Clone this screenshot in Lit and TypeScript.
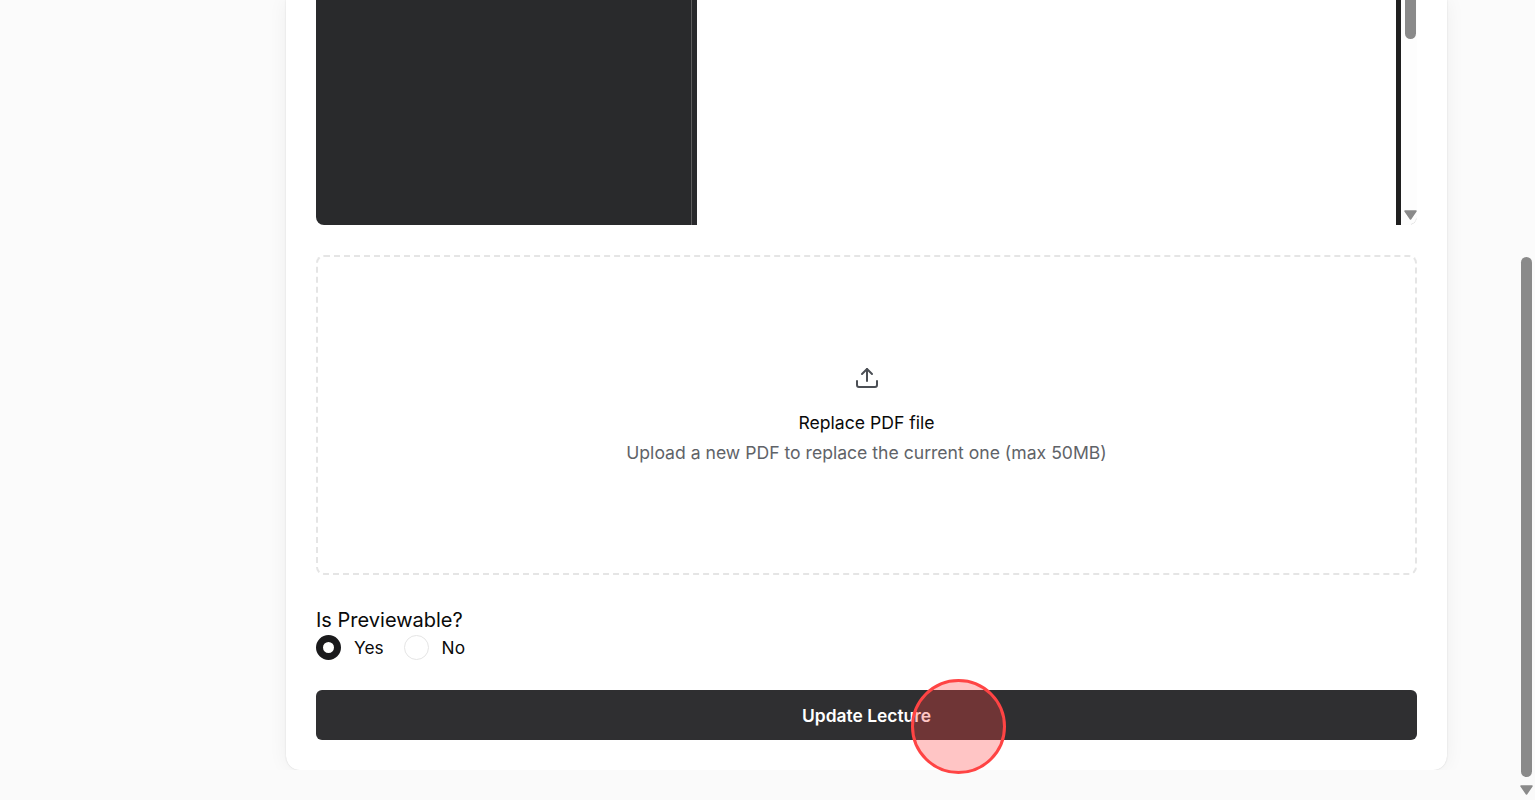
import { LitElement, html, css } from "lit";
import { customElement } from "lit/decorators.js";

@customElement("app-root")
export class AppRoot extends LitElement {
  static styles = css`
    :host {
      display: block;
      position: relative;
      height: 800px;
      overflow: hidden;
      background: #fafafa;
      font-family: Inter, "Liberation Sans", sans-serif;
      color: #0a0a0a;
    }
    .page {
      height: 770px;
      overflow: hidden;
      display: flex;
      flex-direction: column;
      justify-content: flex-end;
      padding-left: 286px;
      box-sizing: border-box;
      background: #fbfbfb;
    }
    .card {
      width: 1161px;
      box-sizing: border-box;
      flex: none;
      background: #fff;
      border-radius: 0 0 14px 14px;
      box-shadow: 0 0 1.5px rgba(0, 0, 0, 0.16), 0 0 20px rgba(0, 0, 0, 0.055);
      padding: 0 30px 30px;
      display: flex;
      flex-direction: column;
    }
    .preview {
      height: 225px;
      display: flex;
      border-radius: 0 0 8px 8px;
      overflow: hidden;
    }
    .side {
      width: 375px;
      background: #292a2c;
      border-right: 1px solid #5c5c5c;
      flex: none;
    }
    .side-end {
      width: 5px;
      background: #292a2c;
      flex: none;
    }
    .doc {
      flex: 1;
      background: #fff;
    }
    .edge {
      width: 5px;
      background: #1f1f1f;
      flex: none;
    }
    .inner-bar {
      width: 16px;
      flex: none;
      background: #fdfdfd;
      display: flex;
      flex-direction: column;
      justify-content: space-between;
      align-items: center;
      padding-left: 3px;
      box-sizing: border-box;
    }
    .inner-thumb {
      width: 11px;
      height: 39px;
      background: #8a8a8a;
      border-radius: 0 0 6px 6px;
    }
    .inner-arrow {
      display: block;
    }
    .drop {
      margin-top: 30px;
      height: 320px;
      box-sizing: border-box;
      border: 2px dashed #e5e5e5;
      border-radius: 8px;
      display: flex;
      flex-direction: column;
      align-items: center;
      justify-content: center;
    }
    .drop svg {
      display: block;
      margin-bottom: 21px;
    }
    .drop-title {
      font-size: 17.6px;
      line-height: 24px;
      color: #0a0a0a;
    }
    .drop-sub {
      margin-top: 6px;
      font-size: 17.6px;
      line-height: 24px;
      color: #5f6368;
    }
    .field {
      margin-top: 32px;
    }
    .field-label {
      font-size: 20px;
      line-height: 26px;
      color: #0a0a0a;
    }
    .radios {
      display: flex;
      align-items: center;
      height: 25px;
      margin-top: 2px;
      font-size: 17.3px;
    }
    .radio {
      width: 25px;
      height: 25px;
      box-sizing: border-box;
      border-radius: 50%;
      flex: none;
    }
    .radio.on {
      border: 7.5px solid #1a1a1c;
      background: #fff;
    }
    .radio.off {
      border: 1px solid #e5e5e5;
      background: #fff;
    }
    .radio-text {
      margin-left: 13px;
      margin-right: 20px;
    }
    .submit {
      margin-top: 30px;
      height: 50px;
      border: none;
      border-radius: 6px;
      background: #2f2f31;
      color: #fff;
      font: 600 17.4px Inter, "Liberation Sans", sans-serif;
    }
    .click {
      position: absolute;
      left: 911px;
      top: 679px;
      width: 95px;
      height: 95px;
      box-sizing: border-box;
      border-radius: 50%;
      border: 3px solid #ff4444;
      background: rgba(255, 68, 68, 0.31);
    }
    .scrollbar {
      position: absolute;
      right: 0;
      top: 0;
      bottom: 0;
      width: 15px;
    }
    .thumb {
      position: absolute;
      left: 1px;
      top: 257px;
      width: 11px;
      height: 520px;
      border-radius: 6px;
      background: #8a8a8a;
    }
    .arrow {
      position: absolute;
      left: 0;
      top: 785px;
    }
  `;

  render() {
    return html`
      <div class="page">
        <section class="card">
          <div class="preview">
            <div class="side"></div>
            <div class="side-end"></div>
            <div class="doc"></div>
            <div class="edge"></div>
            <div class="inner-bar">
              <div class="inner-thumb"></div>
              <svg class="inner-arrow" width="13" height="15" viewBox="0 0 13 15">
                <path d="M1 1H12L6.5 9Z" fill="#8a8a8a" stroke="#8a8a8a" stroke-width="1.5" stroke-linejoin="round" />
                <path d="M12.5 8.5Q12 13 7 14.5" fill="none" stroke="#dcdcdc" stroke-width="1" />
              </svg>
            </div>
          </div>
          <div class="drop">
            <svg width="24" height="24" viewBox="0 0 24 24" fill="none" stroke="#4b4f55" stroke-width="2" stroke-linecap="round" stroke-linejoin="round">
              <path d="M12 15V3" />
              <path d="M7 8l5-5 5 5" />
              <path d="M2 15v4a2 2 0 0 0 2 2h16a2 2 0 0 0 2-2v-4" />
            </svg>
            <div class="drop-title">Replace PDF file</div>
            <div class="drop-sub">Upload a new PDF to replace the current one (max 50MB)</div>
          </div>
          <div class="field">
            <div class="field-label">Is Previewable?</div>
            <div class="radios">
              <span class="radio on"></span><span class="radio-text">Yes</span>
              <span class="radio off"></span><span class="radio-text">No</span>
            </div>
          </div>
          <button class="submit">Update Lecture</button>
        </section>
      </div>
      <div class="click"></div>
      <div class="scrollbar">
        <div class="thumb"></div>
        <svg class="arrow" width="13" height="10" viewBox="0 0 13 10">
          <path d="M1 1H12L6.5 9Z" fill="#8a8a8a" stroke="#8a8a8a" stroke-width="1.5" stroke-linejoin="round" />
        </svg>
      </div>
    `;
  }
}
